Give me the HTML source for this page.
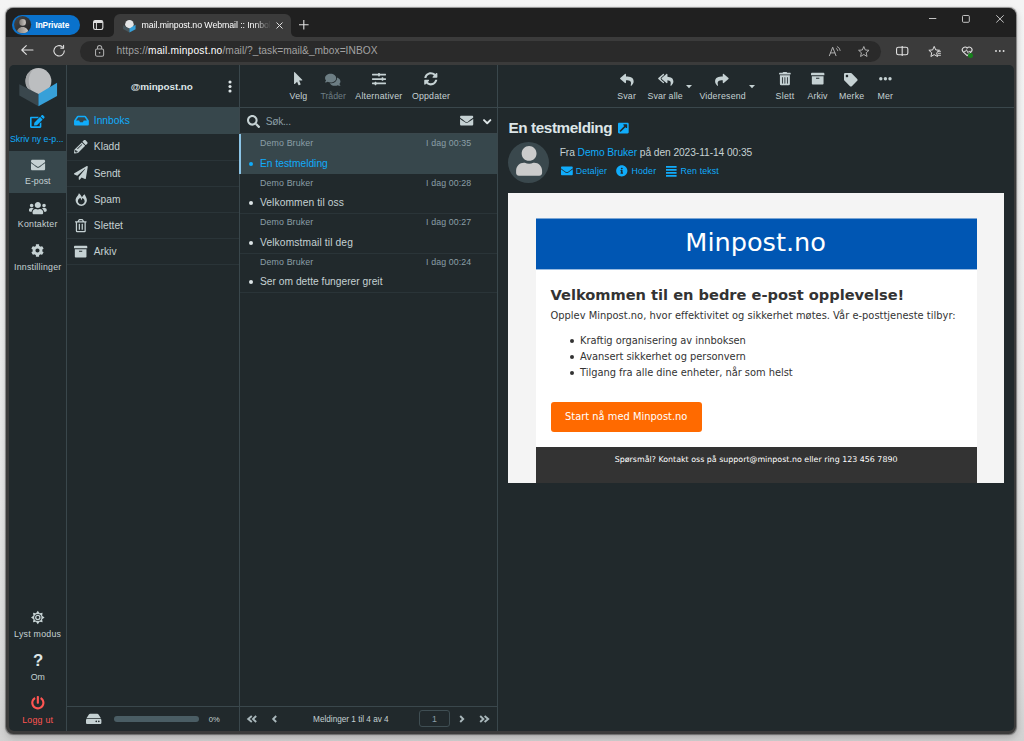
<!DOCTYPE html>
<html lang="no">
<head>
<meta charset="utf-8">
<title>mail.minpost.no Webmail :: Innboks</title>
<style>
html,body{margin:0;padding:0;}
body{width:1024px;height:741px;overflow:hidden;position:relative;
  background:linear-gradient(#f4f4f4 0%,#f0f0f0 30%,#e8e8e8 65%,#dcdcdc 90%,#d2d2d2 100%);
  font-family:"Liberation Sans",sans-serif;color:#c5d1d3;}
#stage,#stage *{position:absolute;box-sizing:border-box;}
#stage{left:0;top:0;width:1024px;height:741px;overflow:hidden;}
#win{left:6.2px;top:8px;width:1009.9px;height:726px;border-radius:7.5px;background:#3b3b3b;
  box-shadow:0 0 1px 0.5px rgba(0,0,0,.4),0 4px 9px 0 rgba(0,0,0,.15),2px 2px 6px 0 rgba(0,0,0,.07);}
#titlebar{left:6.2px;top:8px;width:1009.9px;height:28.7px;background:#202020;border-radius:7.5px 7.5px 0 0;}
#tab{left:114px;top:14px;width:177px;height:23px;background:#3b3b3b;border-radius:6px 6px 0 0;}
#urlpill{left:80px;top:40.7px;width:801px;height:21.2px;border-radius:11px;background:#2a2a2a;}
#app{left:9px;top:64.8px;width:1005.1px;height:666.4px;background:#21292c;border-radius:5px 5px 5px 5px;}
.t{white-space:nowrap;}
.v{width:1px;background:#3a474c;}
.h{height:1px;background:#3a474c;}
.hf{height:1px;background:#2a3438;}
.sel{background:#37474c;}
svg{overflow:visible;}
</style>
</head>
<body>
<div id="stage">
<div id="win"></div>
<div id="titlebar"></div>
<div id="tab"></div>
<div id="urlpill"></div>
<div style="left:109px;top:31.7px;width:5px;height:5px;background:#3b3b3b"></div><div style="left:109px;top:31.7px;width:5px;height:5px;background:#202020;border-radius:0 0 5px 0"></div>
<div style="left:291px;top:31.700px;width:5px;height:5px;background:#3b3b3b"></div><div style="left:291px;top:31.700px;width:5px;height:5px;background:#202020;border-radius:0 0 0 5px"></div>
<div id="app"></div>
<!-- layout shapes -->
<div class="sel" style="left:9px;top:150.5px;width:57.5px;height:42.4px"></div>
<div class="v" style="left:66px;top:64.8px;height:666.4px"></div>
<div class="v" style="left:239px;top:64.8px;height:666.4px"></div>
<div class="v" style="left:497px;top:64.8px;height:666.4px"></div>
<div class="h" style="left:240px;top:107px;width:774.1px"></div>
<div class="sel" style="left:67px;top:107.3px;width:172px;height:26.6px"></div>
<div class="hf" style="left:67px;top:159.6px;width:172px"></div>
<div class="hf" style="left:67px;top:185.7px;width:172px"></div>
<div class="hf" style="left:67px;top:211.8px;width:172px"></div>
<div class="hf" style="left:67px;top:237.9px;width:172px"></div>
<div class="hf" style="left:67px;top:264px;width:172px"></div>
<div class="h" style="left:240px;top:133.300px;width:257px"></div>
<div class="sel" style="left:240px;top:134px;width:257px;height:39.5px"></div>
<div style="left:238.800px;top:134px;width:2px;height:39.500px;background:#8cc4e6"></div>
<div class="hf" style="left:240px;top:213px;width:257px"></div>
<div class="hf" style="left:240px;top:252.500px;width:257px"></div>
<div class="hf" style="left:240px;top:292px;width:257px"></div>
<div class="h" style="left:67px;top:706px;width:430px"></div>
<div style="left:113.900px;top:716.300px;width:85px;height:5.500px;border-radius:3px;background:#4a5d64"></div>
<div style="left:418.700px;top:710.300px;width:31.100px;height:16.800px;border:1px solid #3f4e53;border-radius:3px"></div>
<div style="left:507.800px;top:141.900px;width:41.400px;height:41.400px;border-radius:50%;background:#3a484d"></div>
<!-- email body -->
<div style="left:508px;top:193px;width:495.800px;height:290.300px;background:#f4f4f4"></div>
<div style="left:536px;top:218.500px;width:440.600px;height:264.800px;background:#ffffff"></div>
<div style="left:536px;top:219px;width:440.600px;height:50px;background:#0056b3"></div><div style="left:536px;top:218px;width:440.600px;height:1px;background:#7aa5d4"></div><div style="left:536px;top:269px;width:440.600px;height:1px;background:#99bbe1"></div>
<div style="left:536px;top:446.500px;width:440.600px;height:36.800px;background:#333333"></div>
<div style="left:550.600px;top:401.500px;width:151.600px;height:30.500px;border-radius:3px;background:#ff6a00"></div>
<div style="left:569.9px;top:339.3px;width:4px;height:4px;border-radius:50%;background:#333"></div>
<div style="left:569.9px;top:355.1px;width:4px;height:4px;border-radius:50%;background:#333"></div>
<div style="left:569.9px;top:370.9px;width:4px;height:4px;border-radius:50%;background:#333"></div>
<!-- list bullets -->
<div style="left:249.400px;top:161.500px;width:4px;height:4px;border-radius:50%;background:#10acfb"></div>
<div style="left:249.400px;top:201px;width:4px;height:4px;border-radius:50%;background:#dde5e7"></div>
<div style="left:249.400px;top:240.500px;width:4px;height:4px;border-radius:50%;background:#dde5e7"></div>
<div style="left:249.400px;top:280px;width:4px;height:4px;border-radius:50%;background:#dde5e7"></div>
<!-- inprivate pill -->
<div style="left:12.100px;top:14.750px;width:67.500px;height:20.500px;border-radius:10.300px;background:#0a72cc"></div>

<svg style="left:18.60px;top:68.00px;width:38.10px;height:38.20px" viewBox="0 0 38.1 38.2" ><circle cx="19.45" cy="13.05" r="12.95" fill="#bcbec0"/>
<path d="M14.2 1.2 A12.95 12.95 0 0 0 14.2 24.9 A18 18 0 0 1 14.2 1.2Z" fill="#a4a6a8"/>
<path d="M0.34 16.3 L19.45 26 L19.45 38.15 L0.34 27.6Z" fill="#3a474d"/>
<path d="M38.07 14.7 L19.45 26 L19.45 38.15 L38.07 27.95Z" fill="#37a0d9"/></svg>
<svg style="left:30.20px;top:115.20px;width:14.60px;height:13.00px" viewBox="0 0 576 512" preserveAspectRatio="xMidYMid meet"><path d="M402.600 83.200l90.200 90.200c3.800 3.800 3.800 10 0 13.800L274.400 405.600l-92.800 10.300c-12.400 1.400-22.900-9.100-21.500-21.500l10.300-92.800L388.800 83.200c3.800-3.800 10-3.800 13.800 0zm162-22.900l-48.800-48.800c-15.200-15.200-39.900-15.200-55.200 0l-35.400 35.400c-3.800 3.800-3.800 10 0 13.800l90.200 90.200c3.800 3.800 10 3.800 13.800 0l35.400-35.400c15.200-15.300 15.200-40 0-55.200zM384 346.200V448H64V128h229.800c3.200 0 6.200-1.300 8.500-3.500l40-40c7.600-7.600 2.200-20.500-8.500-20.500H48C21.500 64 0 85.500 0 112v352c0 26.500 21.500 48 48 48h352c26.500 0 48-21.500 48-48V306.200c0-10.700-12.900-16-20.500-8.500l-40 40c-2.200 2.300-3.500 5.300-3.500 8.500z" fill="#10acfb"/></svg>
<svg style="left:30.60px;top:157.50px;width:14.10px;height:14.10px" viewBox="0 0 512 512" preserveAspectRatio="xMidYMid meet"><path d="M502.3 190.8c3.9-3.1 9.7-.2 9.7 4.700V400c0 26.500-21.500 48-48 48H48c-26.500 0-48-21.500-48-48V195.600c0-5 5.700-7.800 9.700-4.700 22.400 17.400 52.100 39.500 154.100 113.600 21.100 15.400 56.700 47.800 92.200 47.600 35.700.3 72-32.800 92.300-47.600 102-74.100 131.600-96.300 154-113.700zM256 320c23.200.4 56.600-29.200 73.400-41.400 132.700-96.300 142.800-104.700 173.400-128.700 5.800-4.500 9.200-11.500 9.200-18.900v-19c0-26.500-21.500-48-48-48H48C21.500 64 0 85.500 0 112v19c0 7.400 3.400 14.300 9.200 18.900 30.600 23.900 40.700 32.400 173.400 128.700 16.800 12.200 50.200 41.800 73.400 41.400z" fill="#c5d1d3"/></svg>
<svg style="left:28.80px;top:200.60px;width:17.70px;height:14.20px" viewBox="0 0 640 512" preserveAspectRatio="xMidYMid meet"><path d="M96 224c35.300 0 64-28.700 64-64s-28.700-64-64-64-64 28.700-64 64 28.700 64 64 64zm448 0c35.300 0 64-28.700 64-64s-28.700-64-64-64-64 28.700-64 64 28.700 64 64 64zm32 32h-64c-17.600 0-33.500 7.100-45.100 18.600 40.300 22.100 68.900 62 75.100 109.400h66c17.700 0 32-14.300 32-32v-32c0-35.300-28.700-64-64-64zm-256 0c61.900 0 112-50.100 112-112S381.900 32 320 32 208 82.100 208 144s50.100 112 112 112zm76.800 32h-8.300c-20.800 10-43.900 16-68.500 16s-47.600-6-68.500-16h-8.300C179.600 288 128 339.600 128 403.200V432c0 26.500 21.500 48 48 48h288c26.500 0 48-21.500 48-48v-28.800c0-63.600-51.600-115.200-115.200-115.200zm-223.700-13.400C161.500 263.100 145.600 256 128 256H64c-35.300 0-64 28.700-64 64v32c0 17.700 14.300 32 32 32h65.900c6.300-47.400 34.900-87.300 75.200-109.400z" fill="#c5d1d3"/></svg>
<svg style="left:31.00px;top:243.60px;width:13.00px;height:13.00px" viewBox="0 0 512 512" preserveAspectRatio="xMidYMid meet"><path d="M487.400 315.700l-42.600-24.600c4.300-23.200 4.300-47 0-70.200l42.600-24.600c4.900-2.800 7.100-8.600 5.500-14-11.100-35.600-30-67.800-54.700-94.600-3.800-4.100-10-5.100-14.800-2.300L380.800 110c-17.900-15.400-38.500-27.300-60.800-35.100V25.800c0-5.600-3.900-10.500-9.400-11.700-36.700-8.200-74.300-7.800-109.200 0-5.500 1.200-9.400 6.100-9.400 11.700V75c-22.200 7.900-42.800 19.800-60.800 35.100L88.700 85.500c-4.900-2.800-11-1.900-14.800 2.300-24.700 26.700-43.600 58.900-54.700 94.600-1.700 5.400.6 11.200 5.500 14L67.300 221c-4.300 23.200-4.300 47 0 70.200l-42.600 24.600c-4.900 2.800-7.100 8.600-5.500 14 11.100 35.600 30 67.800 54.700 94.600 3.800 4.100 10 5.100 14.800 2.300l42.600-24.600c17.900 15.400 38.500 27.300 60.800 35.100v49.200c0 5.600 3.900 10.500 9.400 11.700 36.700 8.200 74.300 7.800 109.200 0 5.500-1.200 9.400-6.100 9.400-11.700v-49.200c22.200-7.900 42.800-19.800 60.800-35.100l42.600 24.600c4.900 2.800 11 1.900 14.800-2.300 24.700-26.700 43.600-58.900 54.700-94.600 1.500-5.500-.7-11.300-5.600-14.100zM256 336c-44.100 0-80-35.900-80-80s35.900-80 80-80 80 35.900 80 80-35.900 80-80 80z" fill="#c5d1d3"/></svg>
<svg style="left:30.80px;top:611.20px;width:13.60px;height:13.00px" viewBox="0 0 13.6 13" ><path d="M6.80 -0.30 L8.60 2.16 L11.61 1.69 L11.14 4.70 L13.60 6.50 L11.14 8.30 L11.61 11.31 L8.60 10.84 L6.80 13.30 L5.00 10.84 L1.99 11.31 L2.46 8.30 L0.00 6.50 L2.46 4.70 L1.99 1.69 L5.00 2.16Z" fill="#c5d1d3"/><circle cx="6.8" cy="6.5" r="3.6" fill="#21292c"/><circle cx="6.8" cy="6.5" r="2.1" fill="none" stroke="#c5d1d3" stroke-width="1.3"/></svg>
<svg style="left:30.80px;top:696.00px;width:13.70px;height:13.70px" viewBox="0 0 512 512" preserveAspectRatio="xMidYMid meet"><path d="M400 54.100c63 45 104 118.600 104 201.900 0 136.800-110.800 247.700-247.500 248C120 504.300 8.200 393 8 256.400 7.900 173.100 48.900 99.300 111.800 54.200c11.700-8.300 28-4.800 35 7.700L162.600 90c5.900 10.500 3.100 23.800-6.600 31-41.500 30.800-68 79.600-68 134.900-.1 92.300 74.500 168.100 168 168.100 91.600 0 168.600-74.200 168-169.100-.3-51.800-24.700-101.800-68.100-134-9.700-7.200-12.400-20.500-6.500-30.900l15.800-28.100c7-12.400 23.200-16.100 34.800-7.800zM296 264V24c0-13.300-10.700-24-24-24h-32c-13.300 0-24 10.700-24 24v240c0 13.300 10.700 24 24 24h32c13.300 0 24-10.700 24-24z" fill="#ff5552"/></svg>
<svg style="left:73.60px;top:113.90px;width:14.90px;height:13.20px" viewBox="0 0 576 512" preserveAspectRatio="xMidYMid meet"><path d="M567.938 243.908L462.250 85.374A48.003 48.003 0 0 0 422.311 64H153.689a48 48 0 0 0-39.938 21.374L8.062 243.908A47.994 47.994 0 0 0 0 270.533V400c0 26.510 21.490 48 48 48h480c26.510 0 48-21.490 48-48V270.533a47.994 47.994 0 0 0-8.062-26.625zM162.252 128h251.497l85.333 128H376l-32 64H232l-32-64H76.918l85.334-128z" fill="#10acfb"/></svg>
<svg style="left:74.20px;top:140.40px;width:13.60px;height:13.60px" viewBox="0 0 512 512" preserveAspectRatio="xMidYMid meet"><path d="M497.900 142.100l-46.100 46.100c-4.700 4.700-12.300 4.700-17 0l-111-111c-4.700-4.700-4.700-12.300 0-17l46.100-46.100c18.700-18.700 49.100-18.700 67.900 0l60.100 60.100c18.800 18.700 18.800 49.100 0 67.900zM284.200 99.800L21.600 362.400.4 483.900c-2.900 16.400 11.400 30.600 27.800 27.800l121.500-21.300 262.600-262.600c4.700-4.700 4.700-12.300 0-17l-111-111c-4.800-4.700-12.400-4.700-17.100 0zM124.100 339.900c-5.500-5.500-5.500-14.300 0-19.800l154-154c5.500-5.500 14.300-5.500 19.800 0s5.500 14.300 0 19.800l-154 154c-5.500 5.500-14.300 5.500-19.800 0zM88 424h48v36.300l-64.500 11.300-31.100-31.100L51.700 376H88v48z" fill="#c5d1d3"/></svg>
<svg style="left:74.00px;top:166.40px;width:13.80px;height:13.80px" viewBox="0 0 512 512" preserveAspectRatio="xMidYMid meet"><path d="M476 3.200L12.500 270.600c-18.100 10.400-15.800 35.600 2.200 43.200L121 358.400l287.300-253.200c5.500-4.900 13.300 2.600 8.600 8.300L176 407v80.500c0 23.600 28.500 32.900 42.500 15.800L282 426l124.600 52.200c14.200 6 30.400-2.900 33-18.200l72-432C515 7.800 493.300-6.800 476 3.200z" fill="#c5d1d3"/></svg>
<svg style="left:74.70px;top:193.30px;width:12.50px;height:13.00px" viewBox="0 0 12.5 13" ><path d="M3.9 .2C3.500 2.500 .6 4.200 .6 7.350a5.650 5.650 0 0 0 11.300 0C11.900 4.500 10.200 3 9.600 1.200 8.600 2 7.600 3 7 4.300 6.300 2.600 5 1.200 3.900 .2zM6.250 4.700a3.400 3.400 0 1 0 .01 0z" fill="#c5d1d3" fill-rule="evenodd"/><path d="M5.300 4.600 6.500 7.300 7.500 4.700z" fill="#c5d1d3"/></svg>
<svg style="left:75.20px;top:218.90px;width:11.60px;height:13.40px" viewBox="0 0 448 512" preserveAspectRatio="xMidYMid meet"><path d="M268 416h24a12 12 0 0 0 12-12V188a12 12 0 0 0-12-12h-24a12 12 0 0 0-12 12v216a12 12 0 0 0 12 12zM432 80h-82.410l-34-56.700A48 48 0 0 0 274.410 0H173.590a48 48 0 0 0-41.160 23.300L98.410 80H16A16 16 0 0 0 0 96v16a16 16 0 0 0 16 16h16v336a48 48 0 0 0 48 48h288a48 48 0 0 0 48-48V128h16a16 16 0 0 0 16-16V96a16 16 0 0 0-16-16zM171.840 50.910A6 6 0 0 1 177 48h94a6 6 0 0 1 5.150 2.910L293.610 80H154.390zM368 464H80V128h288zm-212-48h24a12 12 0 0 0 12-12V188a12 12 0 0 0-12-12h-24a12 12 0 0 0-12 12v216a12 12 0 0 0 12 12z" fill="#c5d1d3"/></svg>
<svg style="left:74.30px;top:245.00px;width:13.30px;height:13.30px" viewBox="0 0 512 512" preserveAspectRatio="xMidYMid meet"><path d="M32 448c0 17.700 14.300 32 32 32h384c17.700 0 32-14.300 32-32V160H32v288zm160-212c0-6.600 5.400-12 12-12h104c6.600 0 12 5.400 12 12v8c0 6.600-5.400 12-12 12H204c-6.600 0-12-5.400-12-12v-8zM480 32H32C14.300 32 0 46.300 0 64v48c0 8.800 7.200 16 16 16h480c8.800 0 16-7.200 16-16V64c0-17.700-14.300-32-32-32z" fill="#c5d1d3"/></svg>
<svg style="left:227.50px;top:80.00px;width:4.00px;height:13.00px" viewBox="0 0 4 13" fill="#dde5e7"><circle cx="2" cy="2" r="1.55"/><circle cx="2" cy="6.500" r="1.550"/><circle cx="2" cy="11" r="1.550"/></svg>
<svg style="left:294.30px;top:72.30px;width:8.40px;height:13.30px" viewBox="0 0 320 512" preserveAspectRatio="xMidYMid meet"><path d="M302.189 329.126H196.105l55.831 135.993c3.889 9.428-.555 19.999-9.444 23.999l-49.165 21.427c-9.165 4-19.443-.571-23.332-9.714l-53.053-129.136-86.664 89.138C18.729 472.710 0 463.554 0 447.977V18.299C0 1.899 19.921-6.096 30.277 5.443l284.412 292.542c11.472 11.179 3.007 31.141-12.500 31.141z" fill="#c5d1d3"/></svg>
<svg style="left:325.10px;top:72.50px;width:15.50px;height:13.70px" viewBox="0 0 576 512" preserveAspectRatio="xMidYMid meet"><path d="M416 192c0-88.400-93.100-160-208-160S0 103.600 0 192c0 34.300 14.100 65.900 38 92-13.400 30.200-35.500 54.200-35.800 54.500-2.200 2.300-2.800 5.700-1.500 8.700S4.800 352 8 352c36.600 0 66.900-12.300 88.700-25 32.200 15.700 70.300 25 111.300 25 114.900 0 208-71.600 208-160zm122 220c23.900-26 38-57.700 38-92 0-66.900-53.500-124.200-129.300-148.100.9 6.600 1.300 13.300 1.300 20.100 0 105.900-107.700 192-240 192-10.800 0-21.300-.8-31.700-1.900C207.800 439.600 281.800 480 368 480c41 0 79.100-9.200 111.300-25 21.800 12.700 52.100 25 88.700 25 3.200 0 6.100-1.900 7.300-4.800 1.300-2.900.7-6.300-1.500-8.700-.3-.3-22.400-24.200-35.800-54.500z" fill="#6d7e84"/></svg>
<svg style="left:372.00px;top:72.00px;width:14.00px;height:14.00px" viewBox="0 0 512 512" preserveAspectRatio="xMidYMid meet"><path d="M496 384H160v-16c0-8.800-7.200-16-16-16h-32c-8.800 0-16 7.200-16 16v16H16c-8.800 0-16 7.200-16 16v32c0 8.800 7.200 16 16 16h80v16c0 8.800 7.200 16 16 16h32c8.800 0 16-7.200 16-16v-16h336c8.800 0 16-7.200 16-16v-32c0-8.800-7.200-16-16-16zm0-160h-80v-16c0-8.800-7.200-16-16-16h-32c-8.800 0-16 7.200-16 16v16H16c-8.800 0-16 7.200-16 16v32c0 8.800 7.200 16 16 16h336v16c0 8.800 7.200 16 16 16h32c8.800 0 16-7.200 16-16v-16h80c8.800 0 16-7.200 16-16v-32c0-8.800-7.200-16-16-16zm0-160H288V48c0-8.800-7.200-16-16-16h-32c-8.800 0-16 7.200-16 16v16H16C7.200 64 0 71.200 0 80v32c0 8.800 7.200 16 16 16h208v16c0 8.800 7.200 16 16 16h32c8.800 0 16-7.200 16-16v-16h208c8.800 0 16-7.200 16-16V80c0-8.800-7.200-16-16-16z" fill="#c5d1d3"/></svg>
<svg style="left:424.00px;top:72.40px;width:13.60px;height:13.60px" viewBox="0 0 512 512" preserveAspectRatio="xMidYMid meet"><path d="M370.720 133.280C339.458 104.008 298.888 87.962 255.848 88c-77.458.068-144.328 53.178-162.791 126.850-1.344 5.363-6.122 9.150-11.651 9.150H24.103c-7.498 0-13.194-6.807-11.807-14.176C33.933 94.924 134.813 8 256 8c66.448 0 126.791 26.136 171.315 68.685L463.030 40.970C478.149 25.851 504 36.559 504 57.941V192c0 13.255-10.745 24-24 24H345.941c-21.382 0-32.090-25.851-16.971-40.971l41.750-41.749zM32 296h134.059c21.382 0 32.090 25.851 16.971 40.971l-41.750 41.750c31.262 29.273 71.835 45.319 114.876 45.280 77.418-.070 144.315-53.144 162.787-126.849 1.344-5.363 6.122-9.150 11.651-9.150h57.304c7.498 0 13.194 6.807 11.807 14.176C478.067 417.076 377.187 504 256 504c-66.448 0-126.791-26.136-171.315-68.685L48.970 471.030C33.851 486.149 8 475.441 8 454.059V320c0-13.255 10.745-24 24-24z" fill="#c5d1d3"/></svg>
<svg style="left:247.20px;top:114.60px;width:13.10px;height:13.10px" viewBox="0 0 512 512" preserveAspectRatio="xMidYMid meet"><path d="M505 442.700L405.300 343c-4.500-4.500-10.600-7-17-7H372c27.600-35.300 44-79.700 44-128C416 93.100 322.900 0 208 0S0 93.100 0 208s93.100 208 208 208c48.300 0 92.700-16.400 128-44v16.300c0 6.400 2.500 12.500 7 17l99.700 99.700c9.400 9.400 24.600 9.400 33.900 0l28.300-28.300c9.400-9.400 9.400-24.600.1-34zM208 336c-70.700 0-128-57.200-128-128 0-70.700 57.200-128 128-128 70.700 0 128 57.200 128 128 0 70.700-57.200 128-128 128z" fill="#c5d1d3"/></svg>
<svg style="left:460.00px;top:114.40px;width:13.30px;height:13.20px" viewBox="0 0 512 512" preserveAspectRatio="xMidYMid meet"><path d="M502.3 190.8c3.9-3.1 9.7-.2 9.7 4.700V400c0 26.500-21.500 48-48 48H48c-26.500 0-48-21.500-48-48V195.600c0-5 5.700-7.800 9.700-4.700 22.400 17.400 52.100 39.500 154.100 113.600 21.100 15.400 56.700 47.800 92.200 47.600 35.700.3 72-32.800 92.300-47.600 102-74.100 131.600-96.300 154-113.700zM256 320c23.200.4 56.600-29.200 73.400-41.400 132.700-96.300 142.800-104.700 173.400-128.700 5.800-4.500 9.200-11.500 9.200-18.900v-19c0-26.500-21.500-48-48-48H48C21.500 64 0 85.500 0 112v19c0 7.400 3.400 14.300 9.200 18.900 30.600 23.900 40.700 32.400 173.400 128.700 16.800 12.200 50.200 41.800 73.400 41.400z" fill="#c5d1d3"/></svg>
<svg style="left:483.00px;top:118.60px;width:8.40px;height:5.60px" viewBox="0 0 8.4 5.6" ><path d="M1 1.100 4.200 4.300 7.400 1.100" fill="none" stroke="#dde5e7" stroke-width="1.900" stroke-linecap="round" stroke-linejoin="round"/></svg>
<svg style="left:619.70px;top:72.60px;width:13.70px;height:13.60px" viewBox="0 0 512 512" preserveAspectRatio="xMidYMid meet"><path d="M8.309 189.836L184.313 37.851C199.719 24.546 224 35.347 224 56.015v80.053c160.629 1.839 288 34.032 288 186.258 0 61.441-39.581 122.309-83.333 154.132-13.653 9.931-33.111-2.533-28.077-18.631 45.344-145.012-21.507-183.510-176.590-185.742V360c0 20.700-24.300 31.453-39.687 18.164l-176.004-152c-11.071-9.562-11.086-26.753 0-36.328z" fill="#c5d1d3"/></svg>
<svg style="left:657.50px;top:72.60px;width:15.50px;height:13.60px" viewBox="0 0 576 512" preserveAspectRatio="xMidYMid meet"><path d="M136.309 189.836L312.313 37.851C327.720 24.546 352 35.348 352 56.015v82.763c129.182 10.231 224 52.212 224 183.548 0 61.441-39.582 122.309-83.333 154.132-13.653 9.931-33.111-2.533-28.077-18.631 38.512-123.162-3.922-169.482-112.590-182.015v84.175c0 20.701-24.300 31.453-39.687 18.164L136.309 226.164c-11.071-9.561-11.086-26.753 0-36.328zm-128 36.328L184.313 378.150C199.700 391.439 224 380.687 224 359.986v-15.818l-108.606-93.785A55.960 55.960 0 0 1 96 207.998a55.953 55.953 0 0 1 19.393-42.380L224 71.832V56.015c0-20.667-24.280-31.469-39.687-18.164L8.309 189.836c-11.086 9.575-11.071 26.767 0 36.328z" fill="#c5d1d3"/></svg>
<svg style="left:715.40px;top:72.60px;width:13.80px;height:13.60px" viewBox="0 0 512 512" preserveAspectRatio="xMidYMid meet"><path d="M503.691 189.836L327.687 37.851C312.281 24.546 288 35.347 288 56.015v80.053C127.371 137.907 0 170.100 0 322.326c0 61.441 39.581 122.309 83.333 154.132 13.653 9.931 33.111-2.533 28.077-18.631C66.066 312.814 132.917 274.316 288 272.085V360c0 20.700 24.300 31.453 39.687 18.164l176.004-152c11.071-9.561 11.086-26.753 0-36.328z" fill="#c5d1d3"/></svg>
<svg style="left:686.00px;top:85.00px;width:6.00px;height:3.20px" viewBox="0 0 6 3.200" ><path d="M0 0h6L3 3.200z" fill="#c5d1d3"/></svg>
<svg style="left:748.80px;top:85.00px;width:6.00px;height:3.20px" viewBox="0 0 6 3.200" ><path d="M0 0h6L3 3.200z" fill="#c5d1d3"/></svg>
<svg style="left:778.80px;top:72.30px;width:11.80px;height:13.30px" viewBox="0 0 448 512" preserveAspectRatio="xMidYMid meet"><path d="M32 464a48 48 0 0 0 48 48h288a48 48 0 0 0 48-48V128H32zm272-256a16 16 0 0 1 32 0v224a16 16 0 0 1-32 0zm-96 0a16 16 0 0 1 32 0v224a16 16 0 0 1-32 0zm-96 0a16 16 0 0 1 32 0v224a16 16 0 0 1-32 0zM432 32H312l-9.400-18.700A24 24 0 0 0 281.100 0H166.800a23.720 23.720 0 0 0-21.400 13.300L136 32H16A16 16 0 0 0 0 48v32a16 16 0 0 0 16 16h416a16 16 0 0 0 16-16V48a16 16 0 0 0-16-16z" fill="#c5d1d3"/></svg>
<svg style="left:811.00px;top:72.40px;width:13.40px;height:13.40px" viewBox="0 0 512 512" preserveAspectRatio="xMidYMid meet"><path d="M32 448c0 17.700 14.300 32 32 32h384c17.700 0 32-14.300 32-32V160H32v288zm160-212c0-6.600 5.400-12 12-12h104c6.600 0 12 5.400 12 12v8c0 6.600-5.400 12-12 12H204c-6.600 0-12-5.400-12-12v-8zM480 32H32C14.300 32 0 46.300 0 64v48c0 8.800 7.200 16 16 16h480c8.800 0 16-7.200 16-16V64c0-17.700-14.300-32-32-32z" fill="#c5d1d3"/></svg>
<svg style="left:844.40px;top:72.50px;width:13.60px;height:13.60px" viewBox="0 0 512 512" preserveAspectRatio="xMidYMid meet"><path d="M0 252.118V48C0 21.490 21.490 0 48 0h204.118a48 48 0 0 1 33.941 14.059l211.882 211.882c18.745 18.745 18.745 49.137 0 67.882L293.823 497.941c-18.745 18.745-49.137 18.745-67.882 0L14.059 286.059A48 48 0 0 1 0 252.118zM112 64c-26.510 0-48 21.490-48 48s21.490 48 48 48 48-21.490 48-48-21.490-48-48-48z" fill="#c5d1d3"/></svg>
<svg style="left:879.00px;top:76.80px;width:12.80px;height:3.60px" viewBox="0 0 12.800 3.600" fill="#c5d1d3"><circle cx="1.800" cy="1.800" r="1.700"/><circle cx="6.400" cy="1.800" r="1.700"/><circle cx="11" cy="1.800" r="1.700"/></svg>
<svg style="left:617.50px;top:121.84px;width:10.70px;height:12.23px" viewBox="0 0 448 512" preserveAspectRatio="xMidYMid meet"><path d="M448 80v352c0 26.510-21.490 48-48 48H48c-26.510 0-48-21.490-48-48V80c0-26.510 21.490-48 48-48h352c26.510 0 48 21.490 48 48zm-88 16H248.029c-21.313 0-32.080 25.861-16.971 40.971l31.984 31.987L67.515 364.485c-4.686 4.686-4.686 12.284 0 16.971l31.029 31.029c4.687 4.686 12.285 4.686 16.971 0l195.526-195.526 31.988 31.991C358.058 263.977 384 253.425 384 231.979V120c0-13.255-10.745-24-24-24z" fill="#10acfb"/></svg>
<svg style="left:515.60px;top:146.00px;width:26.20px;height:29.70px" viewBox="0 0 448 512" preserveAspectRatio="xMidYMid meet"><path d="M224 256c70.700 0 128-57.300 128-128S294.700 0 224 0 96 57.300 96 128s57.300 128 128 128zm89.600 32h-16.700c-22.200 10.200-46.900 16-72.900 16s-50.600-5.800-72.900-16h-16.700C60.200 288 0 348.200 0 422.400V464c0 26.500 21.500 48 48 48h352c26.500 0 48-21.500 48-48v-41.600c0-74.200-60.200-134.400-134.400-134.400z" fill="#cbcbcb"/></svg>
<svg style="left:560.80px;top:165.10px;width:11.80px;height:11.80px" viewBox="0 0 512 512" preserveAspectRatio="xMidYMid meet"><path d="M502.3 190.8c3.9-3.1 9.7-.2 9.7 4.700V400c0 26.500-21.500 48-48 48H48c-26.500 0-48-21.500-48-48V195.600c0-5 5.700-7.800 9.700-4.700 22.400 17.400 52.100 39.500 154.100 113.600 21.100 15.400 56.700 47.800 92.200 47.600 35.700.3 72-32.800 92.300-47.600 102-74.100 131.600-96.300 154-113.700zM256 320c23.200.4 56.600-29.200 73.400-41.400 132.700-96.300 142.800-104.700 173.400-128.700 5.800-4.500 9.200-11.500 9.200-18.900v-19c0-26.500-21.500-48-48-48H48C21.500 64 0 85.500 0 112v19c0 7.400 3.400 14.300 9.200 18.900 30.600 23.900 40.700 32.400 173.400 128.700 16.800 12.200 50.200 41.800 73.400 41.400z" fill="#10acfb"/></svg>
<svg style="left:616.30px;top:165.20px;width:11.60px;height:11.60px" viewBox="0 0 512 512" preserveAspectRatio="xMidYMid meet"><path d="M256 8C119.043 8 8 119.083 8 256c0 136.997 111.043 248 248 248s248-111.003 248-248C504 119.083 392.957 8 256 8zm0 110c23.196 0 42 18.804 42 42s-18.804 42-42 42-42-18.804-42-42 18.804-42 42-42zm56 254c0 6.627-5.373 12-12 12h-88c-6.627 0-12-5.373-12-12v-24c0-6.627 5.373-12 12-12h12v-64h-12c-6.627 0-12-5.373-12-12v-24c0-6.627 5.373-12 12-12h64c6.627 0 12 5.373 12 12v100h12c6.627 0 12 5.373 12 12v24z" fill="#10acfb"/></svg>
<svg style="left:666.00px;top:165.80px;width:10.60px;height:10.70px" viewBox="0 0 10.600 10.700" ><path d="M0 0h10.600v1.700H0zM0 3h10.600v1.700H0zM0 6h10.600v1.700H0zM0 9h10.600v1.700H0z" fill="#10acfb"/></svg>
<svg style="left:85.90px;top:712.30px;width:15.40px;height:13.70px" viewBox="0 0 576 512" preserveAspectRatio="xMidYMid meet"><path d="M576 304v96c0 26.510-21.490 48-48 48H48c-26.510 0-48-21.490-48-48v-96c0-26.510 21.490-48 48-48h480c26.510 0 48 21.490 48 48zm-48-80a79.557 79.557 0 0 1 30.777 6.165L462.250 85.374A48.003 48.003 0 0 0 422.311 64H153.689a48 48 0 0 0-39.938 21.374L17.223 230.165A79.557 79.557 0 0 1 48 224h480zm-48 96c-17.673 0-32 14.327-32 32s14.327 32 32 32 32-14.327 32-32-14.327-32-32-32zm-96 0c-17.673 0-32 14.327-32 32s14.327 32 32 32 32-14.327 32-32-14.327-32-32-32z" fill="#c5d1d3"/></svg>
<svg style="left:246.90px;top:715.00px;width:10.40px;height:8.00px" viewBox="0 0 10.4 8" ><path d="M4.8 1 L1.2 4 L4.8 7 M9.2 1 L6.0 4 L9.2 7" fill="none" stroke="#a9b7bb" stroke-width="1.900" stroke-linecap="butt" stroke-linejoin="miter"/></svg>
<svg style="left:272.40px;top:715.00px;width:5.40px;height:8.00px" viewBox="0 0 5.4 8" ><path d="M4.2 1.0 L1.2 4.0 L4.2 7.0" fill="none" stroke="#a9b7bb" stroke-width="1.900" stroke-linecap="butt" stroke-linejoin="miter"/></svg>
<svg style="left:458.90px;top:715.00px;width:5.40px;height:8.00px" viewBox="0 0 5.4 8" ><path d="M1.2 1.0 L4.2 4.0 L1.2 7.0" fill="none" stroke="#a9b7bb" stroke-width="1.900" stroke-linecap="butt" stroke-linejoin="miter"/></svg>
<svg style="left:479.40px;top:715.00px;width:10.40px;height:8.00px" viewBox="0 0 10.4 8" ><path d="M1.2 1 L4.4 4 L1.2 7 M5.6 1 L9.2 4 L5.6 7" fill="none" stroke="#a9b7bb" stroke-width="1.900" stroke-linecap="butt" stroke-linejoin="miter"/></svg>
<svg style="left:13.80px;top:16.40px;width:17.20px;height:17.20px" viewBox="0 0 17.2 17.2" ><defs><linearGradient id="avg" x1="0" y1="0" x2="1" y2="1"><stop offset="0" stop-color="#4a4a4a"/><stop offset="1" stop-color="#1e1e1e"/></linearGradient><linearGradient id="avp" x1="0" y1="0" x2="1" y2="0"><stop offset="0" stop-color="#7d7a76"/><stop offset="1" stop-color="#cfcac4"/></linearGradient><clipPath id="avc"><circle cx="8.6" cy="8.6" r="8.6"/></clipPath></defs><circle cx="8.6" cy="8.6" r="8.6" fill="url(#avg)"/><g clip-path="url(#avc)" fill="url(#avp)"><circle cx="8.600" cy="6.400" r="3.300"/><path d="M2.600 17.500c0-4.200 2.700-6.600 6-6.600s6 2.400 6 6.600z"/></g></svg>
<svg style="left:92.50px;top:20.00px;width:10.40px;height:10.10px" viewBox="0 0 10.400 10.100" ><rect x=".55" y=".55" width="9.300" height="9" rx="1.700" fill="none" stroke="#e0e0e0" stroke-width="1.100"/><path d="M.6 2.200a1.600 1.600 0 0 1 1.600-1.600h6a1.600 1.600 0 0 1 1.600 1.600v.9H.6z" fill="#e0e0e0"/><path d="M3.400 2.500v7" stroke="#e0e0e0" stroke-width="1"/></svg>
<svg style="left:123.00px;top:19.90px;width:12.60px;height:12.60px" viewBox="0 0 38.100 38.200" ><circle cx="19.45" cy="13.05" r="12.95" fill="#e4e5e6"/>
<path d="M0.34 16.3 L19.45 26 L19.45 38.15 L0.34 27.6Z" fill="#47565c"/>
<path d="M38.07 14.7 L19.45 26 L19.45 38.15 L38.07 27.950Z" fill="#37a0d9"/></svg>
<svg style="left:276.00px;top:22.30px;width:7.00px;height:7.00px" viewBox="0 0 7 7" ><path d="M.5.500l6 6M6.500.500l-6 6" stroke="#e0e0e0" stroke-width="1" fill="none"/></svg>
<svg style="left:299.40px;top:20.40px;width:9.60px;height:9.60px" viewBox="0 0 9.600 9.600" ><path d="M4.800 0v9.600M0 4.800h9.600" stroke="#e0e0e0" stroke-width="1.100" fill="none"/></svg>
<svg style="left:20.60px;top:45.40px;width:12.20px;height:10.00px" viewBox="0 0 12.200 10" ><path d="M12 5H.9M5.300.600.800 5l4.500 4.400" stroke="#e0e0e0" stroke-width="1.100" fill="none" stroke-linecap="round" stroke-linejoin="round"/></svg>
<svg style="left:53.00px;top:45.00px;width:12.20px;height:11.60px" viewBox="0 0 12.200 11.600" ><path d="M11.300 5.800A5.200 5.200 0 1 1 9.400 1.800" stroke="#e0e0e0" stroke-width="1.100" fill="none" stroke-linecap="round"/><path d="M10.600.300v2.800H7.800" stroke="#e0e0e0" stroke-width="1.100" fill="none" stroke-linecap="round" stroke-linejoin="round"/></svg>
<svg style="left:94.50px;top:45.00px;width:9.20px;height:11.80px" viewBox="0 0 9.200 11.800" ><rect x=".55" y="3.900" width="8.100" height="7.300" rx="1.500" fill="none" stroke="#b0b0b0" stroke-width="1.050"/><path d="M2.500 3.900V2.600a2.100 2.100 0 0 1 4.200 0v1.300" fill="none" stroke="#b0b0b0" stroke-width="1.050"/><rect x="3.900" y="7" width="1.400" height="1.400" rx=".3" fill="#b0b0b0"/></svg>
<svg style="left:828.70px;top:46.00px;width:11.90px;height:10.00px" viewBox="0 0 11.900 10" ><path d="M.4 9.700 3.700 1.200 7 9.700M1.500 6.900h4.400" stroke="#b0b0b0" stroke-width="1" fill="none" stroke-linejoin="round" stroke-linecap="round"/><path d="M7.300 2.500a2.500 2.500 0 0 1 1.500 2.200M8.300.600a4.700 4.700 0 0 1 2.900 3.900" stroke="#b0b0b0" stroke-width=".9" fill="none" stroke-linecap="round"/></svg>
<svg style="left:857.60px;top:45.60px;width:11.60px;height:11.00px" viewBox="0 0 11.600 11" ><path d="M5.80 0.50 L7.27 3.98 L11.03 4.30 L8.18 6.77 L9.03 10.45 L5.80 8.50 L2.57 10.45 L3.42 6.77 L0.57 4.30 L4.33 3.98Z" stroke="#b0b0b0" stroke-width="1" fill="none" stroke-linejoin="round"/></svg>
<svg style="left:896.00px;top:46.00px;width:12.40px;height:10.00px" viewBox="0 0 12.400 10" ><rect x=".55" y="1.200" width="11.300" height="7.600" rx="1.900" fill="none" stroke="#e0e0e0" stroke-width="1.100"/><path d="M6.200 0v10" stroke="#e0e0e0" stroke-width="1.100"/></svg>
<svg style="left:928.90px;top:45.60px;width:12.10px;height:11.00px" viewBox="0 0 12.100 11" ><path d="M5.20 0.40 L6.73 3.90 L10.53 4.27 L7.67 6.80 L8.49 10.53 L5.20 8.60 L1.91 10.53 L2.73 6.80 L-0.13 4.27 L3.67 3.90Z" stroke="#e0e0e0" stroke-width="1" fill="none" stroke-linejoin="round"/><path d="M8.300 5.300h3.600M9 7.300h2.900M8.300 9.300h3.600" stroke="#e0e0e0" stroke-width=".9" fill="none"/><rect x="7.400" y="4.300" width="5" height="6.800" fill="#3b3b3b" opacity="0"/></svg>
<svg style="left:960.90px;top:46.00px;width:12.30px;height:12.00px" viewBox="0 0 12.300 12" ><path d="M6.150 9.600 1.600 5.300A2.800 2.800 0 0 1 6.150 2.100 2.800 2.800 0 0 1 10.700 5.300z" fill="none" stroke="#e0e0e0" stroke-width="1.100" stroke-linejoin="round"/><path d="M2.500 5.400h2l1-1.700 1.400 3 .9-1.300h2" fill="none" stroke="#e0e0e0" stroke-width=".9" stroke-linejoin="round"/><circle cx="9.500" cy="9.400" r="2.500" fill="#16811c"/></svg>
<svg style="left:995.00px;top:50.00px;width:9.60px;height:2.00px" viewBox="0 0 9.600 2" fill="#e0e0e0"><circle cx="1" cy="1" r=".95"/><circle cx="4.800" cy="1" r=".950"/><circle cx="8.600" cy="1" r=".950"/></svg>
<svg style="left:928.70px;top:18.30px;width:7.30px;height:1.00px" viewBox="0 0 7.300 1" ><path d="M0 .5h7.300" stroke="#c4c4c4" stroke-width="1"/></svg>
<svg style="left:962.00px;top:15.20px;width:7.80px;height:7.80px" viewBox="0 0 7.800 7.800" ><rect x=".5" y=".5" width="6.800" height="6.800" rx="1" fill="none" stroke="#c4c4c4" stroke-width="1"/></svg>
<svg style="left:995.70px;top:15.20px;width:8.00px;height:7.80px" viewBox="0 0 8 7.800" ><path d="M.3.300l7.400 7.200M7.700.300.300 7.500" stroke="#c4c4c4" stroke-width="1" fill="none"/></svg>
<div class="t" style="left:35.60px;top:20.00px;font-size:8.30px;line-height:10.79px;color:#ffffff;font-weight:700;letter-spacing:-0.174px;">InPrivate</div>
<div class="t" style="left:141.60px;top:20.08px;font-size:8.80px;line-height:11.44px;color:#ffffff;letter-spacing:-0.082px;width:130px;overflow:hidden;-webkit-mask-image:linear-gradient(90deg,#000 86%,transparent 99%);mask-image:linear-gradient(90deg,#000 86%,transparent 99%);">mail.minpost.no Webmail :: Innboks</div>
<div class="t" style="left:116.60px;top:44.47px;font-size:10.20px;line-height:13.26px;color:#a2a2a2;letter-spacing:0.103px;">https://</div>
<div class="t" style="left:148.00px;top:44.47px;font-size:10.20px;line-height:13.26px;color:#ffffff;letter-spacing:0.210px;">mail.minpost.no</div>
<div class="t" style="left:222.50px;top:44.47px;font-size:10.20px;line-height:13.26px;color:#a2a2a2;letter-spacing:0.034px;">/mail/?_task=mail&amp;_mbox=INBOX</div>
<div class="t" style="left:10.00px;top:133.78px;font-size:8.80px;line-height:11.44px;color:#10acfb;letter-spacing:-0.019px;">Skriv ny e-p...</div>
<div class="t" style="left:25.00px;top:176.28px;font-size:8.80px;line-height:11.44px;color:#c5d1d3;letter-spacing:0.027px;">E-post</div>
<div class="t" style="left:17.80px;top:219.28px;font-size:8.80px;line-height:11.44px;color:#c5d1d3;letter-spacing:0.238px;">Kontakter</div>
<div class="t" style="left:14.00px;top:261.78px;font-size:8.80px;line-height:11.44px;color:#c5d1d3;letter-spacing:0.223px;">Innstillinger</div>
<div class="t" style="left:14.10px;top:629.38px;font-size:8.80px;line-height:11.44px;color:#c5d1d3;letter-spacing:0.244px;">Lyst modus</div>
<div class="t" style="left:30.80px;top:672.48px;font-size:8.80px;line-height:11.44px;color:#c5d1d3;letter-spacing:-0.236px;">Om</div>
<div class="t" style="left:32.90px;top:650.28px;font-size:16.80px;line-height:21.84px;color:#dde5e7;font-weight:700;letter-spacing:-0.066px;">?</div>
<div class="t" style="left:22.20px;top:714.88px;font-size:8.80px;line-height:11.44px;color:#ff5552;letter-spacing:0.249px;">Logg ut</div>
<div class="t" style="left:130.70px;top:80.86px;font-size:9.90px;line-height:12.87px;color:#dde5e7;font-weight:700;letter-spacing:-0.068px;">@minpost.no</div>
<div class="t" style="left:93.80px;top:113.94px;font-size:10.24px;line-height:13.31px;color:#10acfb;letter-spacing:0.020px;">Innboks</div>
<div class="t" style="left:93.80px;top:140.34px;font-size:10.24px;line-height:13.31px;color:#c5d1d3;letter-spacing:0.003px;">Kladd</div>
<div class="t" style="left:93.80px;top:166.54px;font-size:10.24px;line-height:13.31px;color:#c5d1d3;letter-spacing:-0.030px;">Sendt</div>
<div class="t" style="left:93.80px;top:192.75px;font-size:10.24px;line-height:13.31px;color:#c5d1d3;letter-spacing:-0.037px;">Spam</div>
<div class="t" style="left:93.80px;top:218.84px;font-size:10.24px;line-height:13.31px;color:#c5d1d3;letter-spacing:0.026px;">Slettet</div>
<div class="t" style="left:93.80px;top:245.04px;font-size:10.24px;line-height:13.31px;color:#c5d1d3;letter-spacing:-0.010px;">Arkiv</div>
<div class="t" style="left:208.80px;top:714.66px;font-size:7.60px;line-height:9.88px;color:#c5d1d3;letter-spacing:-0.092px;">0%</div>
<div class="t" style="left:289.60px;top:90.88px;font-size:8.80px;line-height:11.44px;color:#c5d1d3;letter-spacing:0.169px;">Velg</div>
<div class="t" style="left:320.40px;top:90.88px;font-size:8.80px;line-height:11.44px;color:#6d7e84;letter-spacing:-0.032px;">Tråder</div>
<div class="t" style="left:355.30px;top:90.88px;font-size:8.80px;line-height:11.44px;color:#c5d1d3;letter-spacing:0.225px;">Alternativer</div>
<div class="t" style="left:411.90px;top:90.88px;font-size:8.80px;line-height:11.44px;color:#c5d1d3;letter-spacing:0.202px;">Oppdater</div>
<div class="t" style="left:265.80px;top:114.84px;font-size:10.24px;line-height:13.31px;color:#8b9fa7;letter-spacing:-0.306px;">Søk...</div>
<div class="t" style="left:260.10px;top:138.38px;font-size:8.80px;line-height:11.44px;color:#8b9fa7;letter-spacing:0.125px;">Demo Bruker</div>
<div class="t" style="left:426.00px;top:138.38px;font-size:8.80px;line-height:11.44px;color:#8b9fa7;letter-spacing:0.124px;">I dag 00:35</div>
<div class="t" style="left:260.00px;top:156.84px;font-size:10.24px;line-height:13.31px;color:#10acfb;letter-spacing:0.007px;">En testmelding</div>
<div class="t" style="left:260.10px;top:177.88px;font-size:8.80px;line-height:11.44px;color:#8b9fa7;letter-spacing:0.125px;">Demo Bruker</div>
<div class="t" style="left:426.00px;top:177.88px;font-size:8.80px;line-height:11.44px;color:#8b9fa7;letter-spacing:0.124px;">I dag 00:28</div>
<div class="t" style="left:260.00px;top:195.94px;font-size:10.24px;line-height:13.31px;color:#c5d1d3;letter-spacing:0.083px;">Velkommen til oss</div>
<div class="t" style="left:260.10px;top:217.38px;font-size:8.80px;line-height:11.44px;color:#8b9fa7;letter-spacing:0.125px;">Demo Bruker</div>
<div class="t" style="left:426.00px;top:217.38px;font-size:8.80px;line-height:11.44px;color:#8b9fa7;letter-spacing:0.124px;">I dag 00:27</div>
<div class="t" style="left:260.00px;top:235.84px;font-size:10.24px;line-height:13.31px;color:#c5d1d3;letter-spacing:0.127px;">Velkomstmail til deg</div>
<div class="t" style="left:260.10px;top:256.88px;font-size:8.80px;line-height:11.44px;color:#8b9fa7;letter-spacing:0.125px;">Demo Bruker</div>
<div class="t" style="left:426.00px;top:256.88px;font-size:8.80px;line-height:11.44px;color:#8b9fa7;letter-spacing:0.124px;">I dag 00:24</div>
<div class="t" style="left:260.00px;top:275.35px;font-size:10.24px;line-height:13.31px;color:#c5d1d3;letter-spacing:0.007px;">Ser om dette fungerer greit</div>
<div class="t" style="left:313.10px;top:714.67px;font-size:8.20px;line-height:10.66px;color:#c5d1d3;letter-spacing:-0.002px;">Meldinger 1 til 4 av 4</div>
<div class="t" style="left:432.00px;top:714.28px;font-size:8.80px;line-height:11.44px;color:#8b9fa7;letter-spacing:-0.906px;">1</div>
<div class="t" style="left:617.20px;top:90.68px;font-size:8.80px;line-height:11.44px;color:#c5d1d3;letter-spacing:0.177px;">Svar</div>
<div class="t" style="left:647.50px;top:90.68px;font-size:8.80px;line-height:11.44px;color:#c5d1d3;letter-spacing:0.118px;">Svar alle</div>
<div class="t" style="left:699.40px;top:90.68px;font-size:8.80px;line-height:11.44px;color:#c5d1d3;letter-spacing:0.224px;">Videresend</div>
<div class="t" style="left:775.60px;top:90.68px;font-size:8.80px;line-height:11.44px;color:#c5d1d3;letter-spacing:0.238px;">Slett</div>
<div class="t" style="left:807.50px;top:90.68px;font-size:8.80px;line-height:11.44px;color:#c5d1d3;letter-spacing:0.087px;">Arkiv</div>
<div class="t" style="left:839.00px;top:90.68px;font-size:8.80px;line-height:11.44px;color:#c5d1d3;letter-spacing:0.189px;">Merke</div>
<div class="t" style="left:877.50px;top:90.68px;font-size:8.80px;line-height:11.44px;color:#c5d1d3;letter-spacing:0.115px;">Mer</div>
<div class="t" style="left:508.60px;top:118.06px;font-size:15.30px;line-height:19.89px;color:#dde5e7;font-weight:700;letter-spacing:-0.431px;">En testmelding</div>
<div class="t" style="left:559.70px;top:145.94px;font-size:10.24px;line-height:13.31px;color:#c5d1d3;letter-spacing:-0.078px;">Fra <span style="position:static;color:#10acfb">Demo Bruker</span> på den 2023-11-14 00:35</div>
<div class="t" style="left:575.80px;top:165.78px;font-size:8.80px;line-height:11.44px;color:#10acfb;letter-spacing:0.111px;">Detaljer</div>
<div class="t" style="left:631.60px;top:165.78px;font-size:8.80px;line-height:11.44px;color:#10acfb;letter-spacing:0.126px;">Hoder</div>
<div class="t" style="left:680.60px;top:165.78px;font-size:8.80px;line-height:11.44px;color:#10acfb;letter-spacing:0.125px;">Ren tekst</div>
<div class="t" style="left:685.30px;top:225.96px;font-size:25.60px;line-height:33.28px;color:#ffffff;font-family:'DejaVu Sans','Liberation Sans',sans-serif;letter-spacing:-0.002px;">Minpost.no</div>
<div class="t" style="left:550.50px;top:284.59px;font-size:14.63px;line-height:19.02px;color:#333333;font-weight:700;font-family:'DejaVu Sans','Liberation Sans',sans-serif;letter-spacing:-0.013px;">Velkommen til en bedre e-post opplevelse!</div>
<div class="t" style="left:550.50px;top:310.06px;font-size:9.90px;line-height:12.87px;color:#333333;font-family:'DejaVu Sans','Liberation Sans',sans-serif;letter-spacing:0.015px;">Opplev Minpost.no, hvor effektivitet og sikkerhet møtes. Vår e-posttjeneste tilbyr:</div>
<div class="t" style="left:580.00px;top:335.17px;font-size:9.90px;line-height:12.87px;color:#333333;font-family:'DejaVu Sans','Liberation Sans',sans-serif;letter-spacing:-0.026px;">Kraftig organisering av innboksen</div>
<div class="t" style="left:580.00px;top:350.96px;font-size:9.90px;line-height:12.87px;color:#333333;font-family:'DejaVu Sans','Liberation Sans',sans-serif;letter-spacing:-0.015px;">Avansert sikkerhet og personvern</div>
<div class="t" style="left:580.00px;top:366.76px;font-size:9.90px;line-height:12.87px;color:#333333;font-family:'DejaVu Sans','Liberation Sans',sans-serif;letter-spacing:-0.022px;">Tilgang fra alle dine enheter, når som helst</div>
<div class="t" style="left:565.00px;top:410.56px;font-size:9.90px;line-height:12.87px;color:#ffffff;font-family:'DejaVu Sans','Liberation Sans',sans-serif;letter-spacing:0.013px;">Start nå med Minpost.no</div>
<div class="t" style="left:614.70px;top:454.87px;font-size:7.90px;line-height:10.27px;color:#ffffff;font-family:'DejaVu Sans','Liberation Sans',sans-serif;letter-spacing:0.009px;">Spørsmål? Kontakt oss på support@minpost.no eller ring 123 456 7890</div>
</div>
</body>
</html>
